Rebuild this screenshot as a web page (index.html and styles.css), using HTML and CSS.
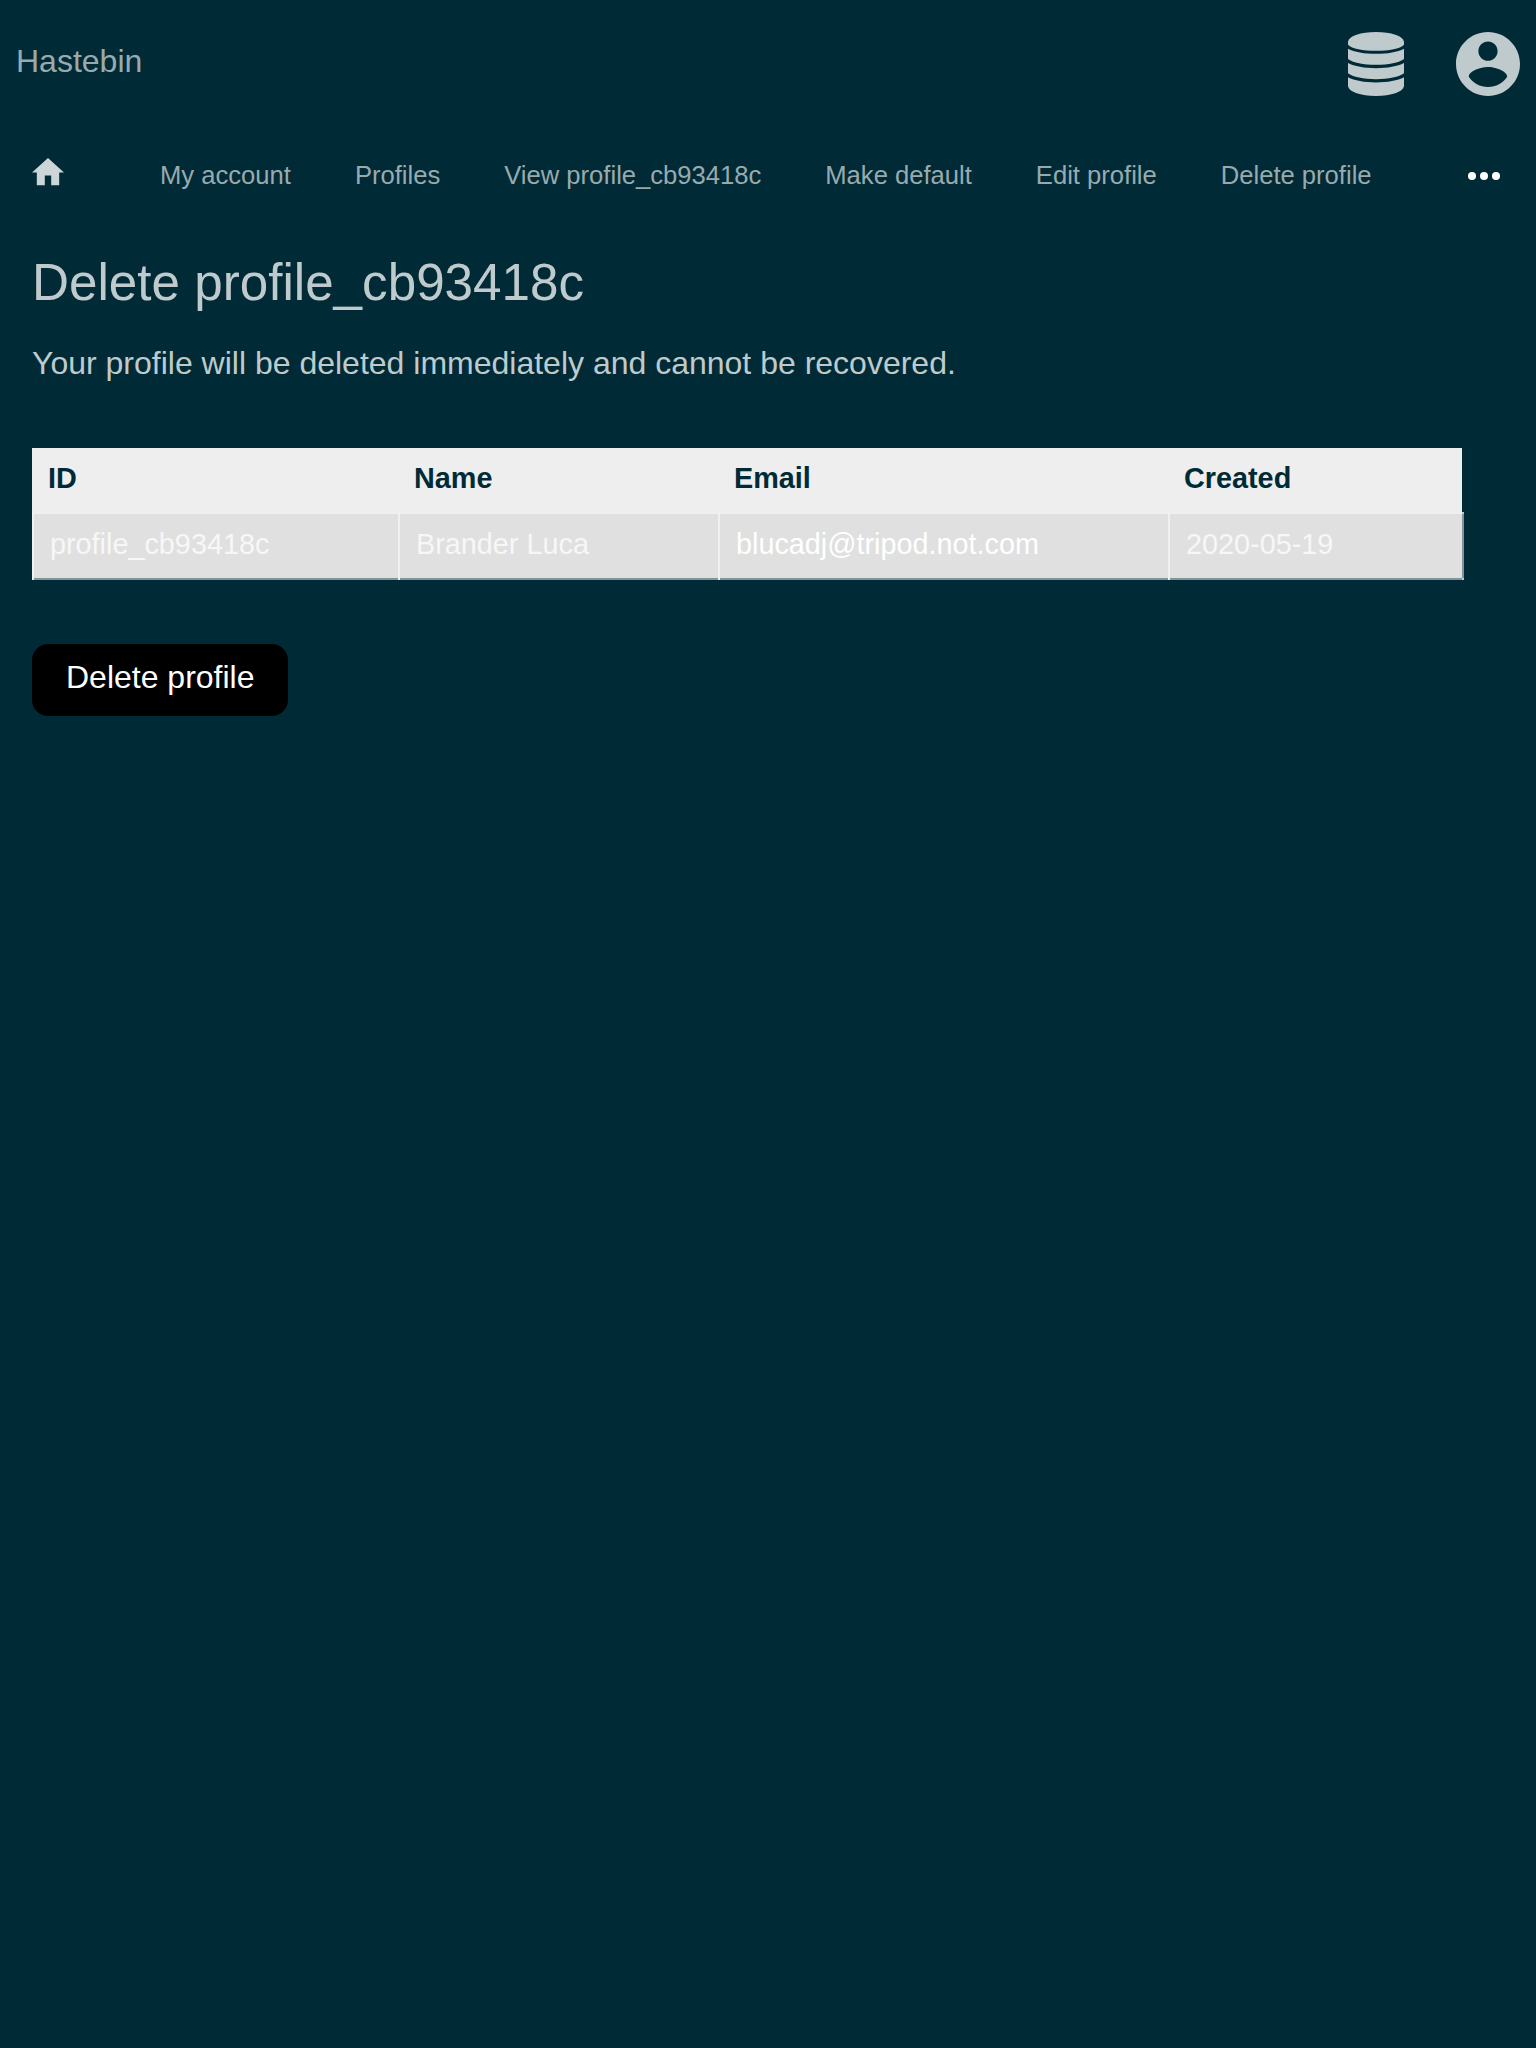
FILE: index.html
```html
<!DOCTYPE html>
<html lang="en">
<head>
<meta charset="utf-8">
<title>Delete profile</title>
<link rel="stylesheet" href="styles.css">
</head>
<body>
<header class="header">
  <a class="brand">Hastebin</a>
  <div class="header-icons">
    <svg class="icon-db" viewBox="0 0 168 192"><path d="M84 0C130 0 165 12 168 29V38C156 50 124 56 84 56S12 50 0 38V29C3 12 38 0 84 0ZM0 50C19 60 49 65.500 84 65.500S149 60 168 50V81C154 92.500 121 98.500 84 98.500S14 92.500 0 81ZM0 93C19 103 49 108.500 84 108.500S149 103 168 93V124C154 135.500 121 141.500 84 141.500S14 135.500 0 124ZM0 136C19 146 49 151.500 84 151.500S149 146 168 136V163C165 180 130 192 84 192S3 180 0 163Z"/></svg>
    <svg class="icon-account" viewBox="2 2 20 20"><path d="M12 2C6.480 2 2 6.480 2 12s4.480 10 10 10 10-4.480 10-10S17.520 2 12 2zm0 3c1.660 0 3 1.340 3 3s-1.340 3-3 3-3-1.340-3-3 1.340-3 3-3zm0 14.200c-2.500 0-4.710-1.280-6-3.220.03-1.990 4-3.080 6-3.080 1.990 0 5.970 1.090 6 3.080-1.290 1.940-3.500 3.220-6 3.220z"/></svg>
  </div>
</header>
<nav class="nav">
  <svg class="icon-home" viewBox="2 3 20 17"><path d="M10 20v-6h4v6h5v-8h3L12 3 2 12h3v8z"/></svg>
  <div class="links">
    <a>My account</a><a>Profiles</a><a>View profile_cb93418c</a><a>Make default</a><a>Edit profile</a><a>Delete profile</a>
  </div>
  <svg class="icon-more" viewBox="0 0 32 8"><circle cx="4" cy="4" r="4"/><circle cx="16" cy="4" r="4"/><circle cx="28" cy="4" r="4"/></svg>
</nav>
<main class="main">
  <h1>Delete profile_cb93418c</h1>
  <p>Your profile will be deleted immediately and cannot be recovered.</p>
  <div class="table">
    <div class="row head"><span>ID</span><span>Name</span><span>Email</span><span>Created</span></div>
    <div class="row data"><span>profile_cb93418c</span><span>Brander Luca</span><span class="email">blucadj@tripod.not.com</span><span class="last">2020-05-19</span></div>
  </div>
  <button class="delete">Delete profile</button>
</main>
</body>
</html>
```
FILE: styles.css
```css
* { box-sizing: border-box; }
body {
  margin: 0;
  min-height: 2048px;
  background: #002b36;
  color: #bfcacd;
  font: 32px/36px "Liberation Sans", Arial, sans-serif;
}
svg { display: block; flex: none; fill: #bfcacd; }
.header {
  display: flex;
  justify-content: space-between;
  height: 128px;
  padding: 32px 16px 0;
}
.brand { padding-top: 11px; color: #99aaaf; }
.header-icons { display: flex; gap: 52px; }
.icon-db { width: 56px; height: 64px; }
.icon-account { width: 64px; height: 64px; }
.nav {
  display: flex;
  height: 96px;
  padding: 0 36px 0 32px;
}
.icon-home { width: 32px; height: 27.2px; margin-top: 30.4px; fill: #ccd5d7; }
.links {
  display: flex;
  flex: 1;
  gap: 64px;
  padding: 33px 0 0 96px;
  color: #99aaaf;
  font-size: 25.6px;
  line-height: 28px;
  white-space: nowrap;
}
.icon-more { width: 32px; height: 8px; margin-top: 44px; fill: #fff; }
.main { padding: 24px 32px; }
h1 { margin: 0; font-size: 51.2px; font-weight: 400; line-height: 70px; }
p { margin: 27px 0 0; }
.table { width: 1432px; margin-top: 67px; font-size: 28.8px; }
.row { display: grid; grid-template-columns: 366px 320px 450px 296px; }
.head {
  width: 1430px;
  height: 64px;
  background: #eee;
  color: #002b36;
  font-weight: 700;
}
.head span { padding: 12px 16px; }
.data { height: 68px; }
.data span {
  padding: 14px 18px;
  background: #e0e0e0;
  box-shadow: inset 2px 0 #f0f0f0, inset 0 2px #efefef, inset 0 -2px #80959a;
  color: #f7f7f7;
}
/* The closing cell also has a right edge, with lighter end caps. */
.data .last {
  background:
    linear-gradient(#f0f0f0, #f0f0f0) left / 2px 100% no-repeat,
    linear-gradient(#bfcacd, #bfcacd) top right / 2px 2px no-repeat,
    linear-gradient(#bfcacd, #bfcacd) bottom right / 2px 2px no-repeat,
    linear-gradient(#80959a, #80959a) right / 2px 100% no-repeat,
    linear-gradient(#efefef, #efefef) top / 100% 2px no-repeat,
    linear-gradient(#80959a, #80959a) bottom / 100% 2px no-repeat,
    #e0e0e0;
  box-shadow: none;
}
.data .email { color: #fff; }
.delete {
  display: block;
  width: 256px;
  height: 72px;
  margin-top: 64px;
  padding: 0 0 6px 0.5px;
  border: 0;
  border-radius: 16px;
  background: #000;
  color: #fff;
  font: inherit;
}
```
